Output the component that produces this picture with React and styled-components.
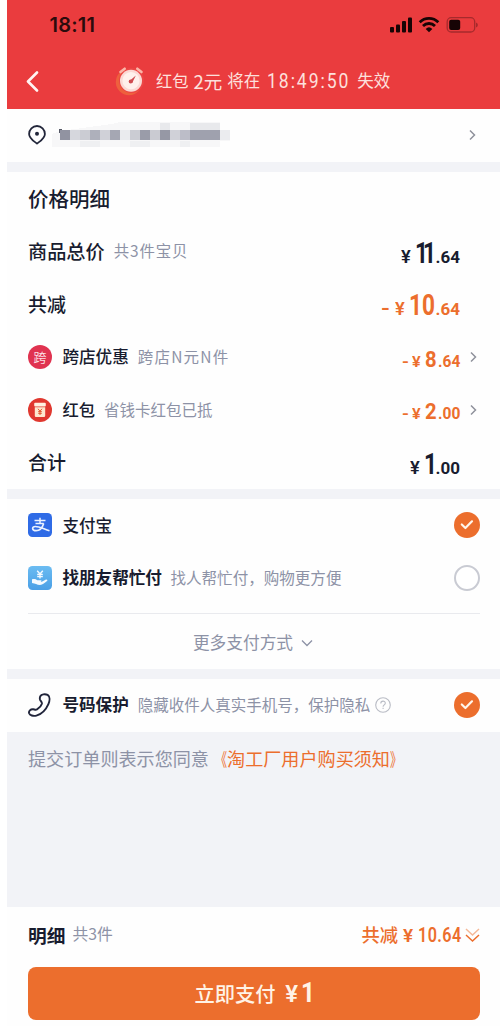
import React from "react";
import styled, { createGlobalStyle } from "styled-components";

const RED = "#ea3c3e";
const ORANGE = "#ec6e2d";
const INK = "#181c2f";
const GREY = "#8d92a6";

const Global = createGlobalStyle`
  * { box-sizing: border-box; }
  body { margin: 0; background: #fff; font-family: "Noto Sans CJK SC", sans-serif; color: ${INK}; }
`;

const Screen = styled.div`
  width: 493px;
  height: 1026px;
  margin-left: 7px;
  display: flex;
  flex-direction: column;
  background: #f2f3f7;
  overflow: hidden;
`;

const Header = styled.header`
  height: 108.5px;
  flex: none;
  background: ${RED};
`;

const StatusBar = styled.div`
  height: 50px;
  padding: 0 22px 0 42.5px;
  display: flex;
  align-items: center;
  justify-content: space-between;
`;

const Time = styled.span`
  font: 600 20px/24px Inter, sans-serif;
  letter-spacing: 0.2px;
  color: #2c0b0c;
`;

const TitleBar = styled.div`
  height: 58px;
  padding: 4px 0 0 19px;
  display: flex;
  align-items: center;
  color: #fde0dd;
  svg { flex: none; }
`;

const ClockSlot = styled.span`
  display: flex;
  margin: 0 11px 0 76px;
`;

const Text = styled.span`
  font-size: ${(p) => p.$size}px;
  font-weight: ${(p) => p.$weight || 400};
  line-height: 1.3;
  letter-spacing: ${(p) => p.$track || 0}px;
  margin-left: ${(p) => p.$gap || 0}px;
  color: ${(p) => p.$color || "inherit"};
  white-space: pre;
`;

const Note = styled(Text)`
  color: ${GREY};
  padding-bottom: 2px;
`;

/* Narrow numerals: glyphs are condensed, the box keeps its drawn width. */
const Num = styled.span`
  display: inline-block;
  flex: none;
  width: ${(p) => p.$w}px;
  margin-left: ${(p) => p.$gap || 0}px;
  font-family: Roboto, sans-serif;
  font-size: ${(p) => p.$size}px;
  font-weight: ${(p) => p.$weight || 700};
  line-height: 1;
  letter-spacing: ${(p) => p.$track || 0}px;
  white-space: pre;
  transform: scaleX(${(p) => p.$k || 1});
  transform-origin: left;
`;

const Panel = styled.section`
  flex: none;
  height: ${(p) => p.$h}px;
  margin-bottom: ${(p) => (p.$last ? 0 : 10)}px;
  padding: 0 20px 0 21px;
  background: #fefefe;
`;

const Row = styled.div`
  height: ${(p) => p.$h || 52.8}px;
  display: flex;
  align-items: center;
  svg { flex: none; }
`;

const IconSlot = styled.span`
  display: flex;
  width: ${(p) => p.$w || 34.4}px;
  flex: none;
`;

const HelpSlot = styled.span`
  display: flex;
  margin-left: 5px;
`;

const Push = styled.span`
  flex: 1;
`;

const Price = styled.div`
  display: flex;
  align-items: baseline;
  color: ${(p) => p.$color};
  margin-right: ${(p) => (p.$arrow ? 10.5 : 20.5)}px;
  padding-top: ${(p) => p.$drop || 4}px;
`;

const Badge = styled.span`
  width: 24px;
  height: 24px;
  border-radius: 50%;
  background: #e03350;
  color: #fbdfe2;
  font-size: 13px;
  line-height: 23px;
  text-align: center;
`;

const Radio = styled.span`
  width: 26px;
  height: 26px;
  flex: none;
  border-radius: 50%;
  display: flex;
  align-items: center;
  justify-content: center;
  background: ${(p) => (p.$on ? ORANGE : "#fff")};
  border: ${(p) => (p.$on ? "none" : "2px solid #c9cbd3")};
`;

const More = styled.div`
  height: 55px;
  border-top: 1px solid #e9eaee;
  display: flex;
  align-items: center;
  justify-content: center;
  gap: 8px;
  padding: 3px 2px 0 0;
  color: ${GREY};
`;

const PayList = styled.div`
  height: 114px;
`;

const Agreement = styled.p`
  margin: 0;
  padding: 13px 21px 0;
  flex: 1;
  font-size: 18.1px;
  line-height: 26px;
  color: ${GREY};
  white-space: nowrap;
`;

const Link = styled.span`
  color: ${ORANGE};
`;

const Bracket = styled.span`
  display: inline-block;
  transform: scaleX(0.65);
  transform-origin: ${(p) => p.$side};
`;

const Footer = styled.footer`
  flex: none;
  height: 119px;
  padding: 0 20px 0 21px;
  background: #fefefe;
`;

const Savings = styled.div`
  display: flex;
  align-items: baseline;
  color: ${ORANGE};
  margin-right: 4px;
`;

const PayButton = styled.button`
  width: 100%;
  height: 53px;
  margin-top: 4px;
  padding: 0 0 0 0;
  border: 0;
  border-radius: 8px;
  background: ${ORANGE};
  color: #fff3e6;
  font-family: inherit;
  display: flex;
  align-items: center;
  justify-content: center;
`;

const Arrow = () => (
  <svg width="7" height="12" viewBox="0 0 7 12" fill="none" stroke="#8f929c" strokeWidth="1.5">
    <path d="M1 1.5 5.5 6 1 10.5" />
  </svg>
);

const Check = () => (
  <Radio $on>
    <svg width="14" height="12" viewBox="0 0 14 12" fill="none" stroke="#fff6ec" strokeWidth="2.2" strokeLinecap="round" strokeLinejoin="round">
      <path d="M1.8 5.5 5.4 9 12 2.3" />
    </svg>
  </Radio>
);

const StatusIcons = () => (
  <svg width="88" height="16" viewBox="0 0 88 16" fill="#170405">
    <rect x="0" y="10" width="4" height="5.5" rx="1" />
    <rect x="6" y="7.5" width="4" height="8" rx="1" />
    <rect x="12" y="4" width="4" height="11.5" rx="1" />
    <rect x="18" y="0.5" width="4" height="15" rx="1" />
    <g fill="none" stroke="#170405" strokeWidth="2.8">
      <path d="M29.7 5.3a13.2 13.2 0 0 1 18.6 0" />
      <path d="M33 9a8.5 8.5 0 0 1 12 0" />
    </g>
    <path d="M35.7 11.9a4.8 4.8 0 0 1 6.6 0L39 15.3z" />
    <rect x="57.2" y="0.7" width="27.5" height="14.3" rx="4" fill="none" stroke="#a62a2c" strokeWidth="1.3" />
    <rect x="59.2" y="2.8" width="11" height="10.2" rx="2" />
    <path d="M86 5.5a2.6 2.6 0 0 1 0 5z" fill="#a62a2c" />
  </svg>
);

const Clock = () => (
  <svg width="30" height="30" viewBox="0 0 30 30">
    <circle cx="14" cy="16" r="13.2" fill="#ee603d" />
    <circle cx="16.5" cy="14.5" r="12.5" fill="#ec4645" />
    <g stroke="#fbb5a8" strokeWidth="2.6" strokeLinecap="round">
      <path d="M5.5 6 9.7 2.7M22.3 2.7 26.5 6" />
    </g>
    <circle cx="16" cy="14.7" r="11" fill="#fbd9d4" />
    <circle cx="16" cy="14.7" r="8.6" fill="#fff1ec" />
    <path d="M14.2 15.3 20.8 9.5 17.2 17z" fill="#cf4c50" />
    <circle cx="15.7" cy="15.6" r="2" fill="#cf4c50" />
  </svg>
);

const Pin = () => (
  <svg width="18" height="20" viewBox="0 0 18 20" fill="none" stroke="#22263a" strokeWidth="1.8">
    <path d="M9 18.6C6.3 16.4 1.1 13.5 1.1 8.9a7.9 7.9 0 0 1 15.8 0c0 4.6-5.2 7.5-7.9 9.7z" strokeLinejoin="round" />
    <circle cx="9" cy="8.8" r="2" fill="#22263a" stroke="none" />
  </svg>
);

const MASK = [
  ["#9193a1", 1], ["#d6d7dd", 1], ["#cbccd3", 1], ["#aeb0bb", 1], ["#d0d1d8", 1], ["#a5a7b3", 1],
  ["#eaebee", 1], ["#cbccd3", 1], ["#9a9ca9", 1], ["#cacbd2", 1], ["#9698a5", 1], ["#d0d1d8", 1],
  ["#bcbdc8", 1], ["#9fa1ae", 3], ["#ebecef", 1],
];

const MaskedAddress = () => {
  let x = 8;
  return (
    <svg width="182" height="26" viewBox="0 0 182 26" shapeRendering="crispEdges">
      <path d="M0 12 8 9 60 2 68 0H168V9H178V19H168V25H0z" fill="#f7f7f8" />
      <path d="M108 1h10v8h-10zM138 1h30v8h-30z" fill="#e8e9ec" />
      <path d="M28 19h20v6H28zM78 19h20v6H78zM128 19h10v6h-10z" fill="#eff0f2" />
      {MASK.map(([c, n], i) => {
        const r = <rect key={i} x={x} y="8" width={n * 10} height="10" fill={c} />;
        x += n * 10;
        return r;
      })}
      <path d="M7 11V7h3" fill="none" stroke="#555866" strokeWidth="1" />
    </svg>
  );
};

const RedPacket = () => (
  <svg width="24" height="24" viewBox="0 0 24 24">
    <circle cx="12" cy="12" r="12" fill="#e0382f" />
    <rect x="6.2" y="4.8" width="11.6" height="3.6" rx="1" fill="#fff0df" />
    <path d="M6.8 9.3h10.4v8.5a1.2 1.2 0 0 1-1.2 1.2H8a1.2 1.2 0 0 1-1.2-1.2z" fill="#fde8cf" />
    <path d="m10 10.8 2 2.4 2-2.4M12 13.2v3.8M10.2 13.6h3.6M10.2 15.3h3.6" stroke="#e2582f" strokeWidth="1" fill="none" />
  </svg>
);

const Alipay = () => (
  <svg width="24" height="24" viewBox="0 0 24 24">
    <rect width="24" height="24" rx="4.5" fill="#2f6be6" />
    <g fill="none" stroke="#eaf2ff">
      <path d="M6.5 7.6h11M12 4.8v5.400M7.500 10.400h8.200" strokeWidth="1.500" />
      <path d="M15.700 10.400c-1.200 3.800-4 7.200-7.600 7.200-4.400 0-4.500-4.100-.8-4.100 3.900 0 8 2.300 14.200 4.300" strokeWidth="1.700" />
    </g>
  </svg>
);

const FriendPay = () => (
  <svg width="24" height="24" viewBox="0 0 24 24">
    <defs>
      <linearGradient id="sky" x1="0" y1="0" x2="0" y2="1">
        <stop offset="0" stopColor="#6bbcf2" />
        <stop offset="1" stopColor="#4a9fe6" />
      </linearGradient>
    </defs>
    <rect width="24" height="24" rx="4.5" fill="url(#sky)" />
    <path d="m9.200 4.800 2.800 3.200 2.800-3.200M12 8v4.500M9.200 8.500h5.600M9.200 10.600h5.600" fill="none" stroke="#f4faff" strokeWidth="1.400" />
    <path d="M4 13.300c2.300-.7 3.800-.2 5.300 1h3.300c1.300 0 1.300 1.600 0 1.600h-2 2.700l4.200-2.200c1.500-.7 2.600.4 1.500 1.300-2 1.800-4.200 3.900-7 3.900-3.300 0-4.600-1.600-8-1.900z" fill="#f4faff" />
  </svg>
);

const Phone = () => (
  <svg width="23" height="24" viewBox="0 0 23 24" fill="none" stroke="#20243a" strokeWidth="1.900" strokeLinejoin="round">
    <path d="M12.300 3.300C13.400 1.200 17 .6 19.600 1.900c2.200 1.400 2.500 5.300.8 9.200-2.300 5.200-6.500 10-12 11.500-3.200.8-6.600-.3-7.300-2.400-.6-2.200 1.400-4.200 4-4 1.500.2 2.500 1 3.900.2 2.200-1.300 4.300-3.700 4.900-5.700.3-1.600-1.200-2.500-1.800-3.900-.4-1.200-.4-2.400.2-3.500z" />
  </svg>
);

const Help = () => (
  <svg width="16" height="16" viewBox="0 0 16 16" fill="none" stroke="#b9bcc5" strokeWidth="1.100">
    <circle cx="8" cy="8" r="7.300" />
    <path d="M5.800 6.400c0-3 4.500-2.900 4.500-.2 0 1.700-2.200 1.700-2.200 3.500M8.100 10.800v1.300" />
  </svg>
);

const Amount = ({ children, minus, large, color, arrow, w, track }) => {
  const [whole, cents] = children.split(".");
  return (
    <Price $color={color} $arrow={arrow} $drop={large ? 4 : 4}>
      {minus && <Num $size={large ? 21 : 17} $w={large ? 14 : 10.5} $k={large ? 1.15 : 1.1} $weight={600}>-</Num>}
      <Num $size={large ? 17.5 : 15.5} $w={large ? 14 : 13} $k={1.05} $weight={600}>¥</Num>
      <Num $size={large ? 29 : 22.5} $w={w} $k={large ? 0.78 : 0.9} $track={track}>{whole}</Num>
      <Num $size={large ? 17 : 16.5} $w={large ? 24 : 21.5} $k={large ? 1 : 0.94}>{"." + cents}</Num>
    </Price>
  );
};

export default function App() {
  return (
    <>
      <Global />
      <Screen>
        <Header>
          <StatusBar>
            <Time>18:11</Time>
            <StatusIcons />
          </StatusBar>
          <TitleBar>
            <svg width="13" height="21" viewBox="0 0 13 21" fill="none" stroke="#fff4f2" strokeWidth="2.6" strokeLinecap="round" strokeLinejoin="round">
              <path d="M11 1.500 2 10.500l9 9" />
            </svg>
            <ClockSlot><Clock /></ClockSlot>
            <Text $size={16.3}>红包</Text>
            <Text $size={18.5} $gap={5}>2元</Text>
            <Text $size={16.5} $gap={5}>将在</Text>
            <Num $size={20} $weight={400} $gap={7} $w={90} $k={0.88} $track={2.2}>18:49:50</Num>
            <Text $size={16.5}>失效</Text>
          </TitleBar>
        </Header>

        <Panel $h={53.5}>
          <Row $h={53}>
            <IconSlot $w={24}><Pin /></IconSlot>
            <MaskedAddress />
            <Push />
            <IconSlot $w={11}><Arrow /></IconSlot>
          </Row>
        </Panel>

        <Panel $h={317}>
          <Row><Text $size={20.5} $weight={500}>价格明细</Text></Row>
          <Row>
            <Text $size={19.2} $weight={500}>商品总价</Text>
            <Note $size={15.4} $gap={9} $track={0.9}>共3件宝贝</Note>
            <Push />
            <Amount large w={21} track={-6.5} color={INK}>11.64</Amount>
          </Row>
          <Row>
            <Text $size={19} $weight={500}>共减</Text>
            <Push />
            <Amount large minus w={27} color={ORANGE}>10.64</Amount>
          </Row>
          <Row>
            <IconSlot><Badge>跨</Badge></IconSlot>
            <Text $size={16.6} $weight={500}>跨店优惠</Text>
            <Note $size={15.5} $gap={9} $track={1.2}>跨店N元N件</Note>
            <Push />
            <Amount minus arrow w={12.5} color={ORANGE}>8.64</Amount>
            <IconSlot $w={10.5}><Arrow /></IconSlot>
          </Row>
          <Row>
            <IconSlot><RedPacket /></IconSlot>
            <Text $size={16.3} $weight={500}>红包</Text>
            <Note $size={15.5} $gap={9}>省钱卡红包已抵</Note>
            <Push />
            <Amount minus arrow w={12.5} color={ORANGE}>2.00</Amount>
            <IconSlot $w={10.5}><Arrow /></IconSlot>
          </Row>
          <Row>
            <Text $size={19} $weight={500}>合计</Text>
            <Push />
            <Amount large w={12} color={INK}>1.00</Amount>
          </Row>
        </Panel>

        <Panel $h={170}>
          <PayList>
            <Row>
              <IconSlot><Alipay /></IconSlot>
              <Text $size={16.5} $weight={500}>支付宝</Text>
              <Push />
              <Check />
            </Row>
            <Row>
              <IconSlot><FriendPay /></IconSlot>
              <Text $size={16.6} $weight={700}>找朋友帮忙付</Text>
              <Note $size={15.55} $gap={8.5}>找人帮忙付，购物更方便</Note>
              <Push />
              <Radio />
            </Row>
          </PayList>
          <More>
            <Text $size={16.7}>更多支付方式</Text>
            <svg width="12" height="8" viewBox="0 0 12 8" fill="none" stroke={GREY} strokeWidth="1.300">
              <path d="m1 1.500 5 5 5-5" />
            </svg>
          </More>
        </Panel>

        <Panel $h={52.5} $last>
          <Row $h={52.5}>
            <IconSlot><Phone /></IconSlot>
            <Text $size={16.6} $weight={700}>号码保护</Text>
            <Note $size={15.5} $gap={9}>隐藏收件人真实手机号，保护隐私</Note>
            <HelpSlot><Help /></HelpSlot>
            <Push />
            <Check />
          </Row>
        </Panel>

        <Agreement>
          提交订单则表示您同意
          <Link>
            <Bracket $side="right">《</Bracket>淘工厂用户购买须知<Bracket $side="left">》</Bracket>
          </Link>
        </Agreement>

        <Footer>
          <Row $h={56}>
            <Text $size={18.7} $weight={700}>明细</Text>
            <Note $size={15.8} $gap={7}>共3件</Note>
            <Push />
            <Savings>
              <Text $size={18.3} $weight={500}>共减</Text>
              <Num $size={19} $weight={600} $w={15} $gap={5}>¥</Num>
              <Num $size={19.5} $weight={600} $w={43} $k={0.83} $track={0.5}>10.64</Num>
            </Savings>
            <svg width="15" height="16" viewBox="0 0 15 16" fill="none" strokeWidth="1.5">
              <path d="m1 2 6.500 6L14 2" stroke="#f5b999" />
              <path d="m1 8 6.500 6L14 8" stroke={ORANGE} />
            </svg>
          </Row>
          <PayButton>
            <Text $size={20.3} $weight={500}>立即支付</Text>
            <Num $size={24} $weight={600} $w={18} $gap={7}>¥</Num>
            <Num $size={27} $w={13} $k={0.9}>1</Num>
          </PayButton>
        </Footer>
      </Screen>
    </>
  );
}
